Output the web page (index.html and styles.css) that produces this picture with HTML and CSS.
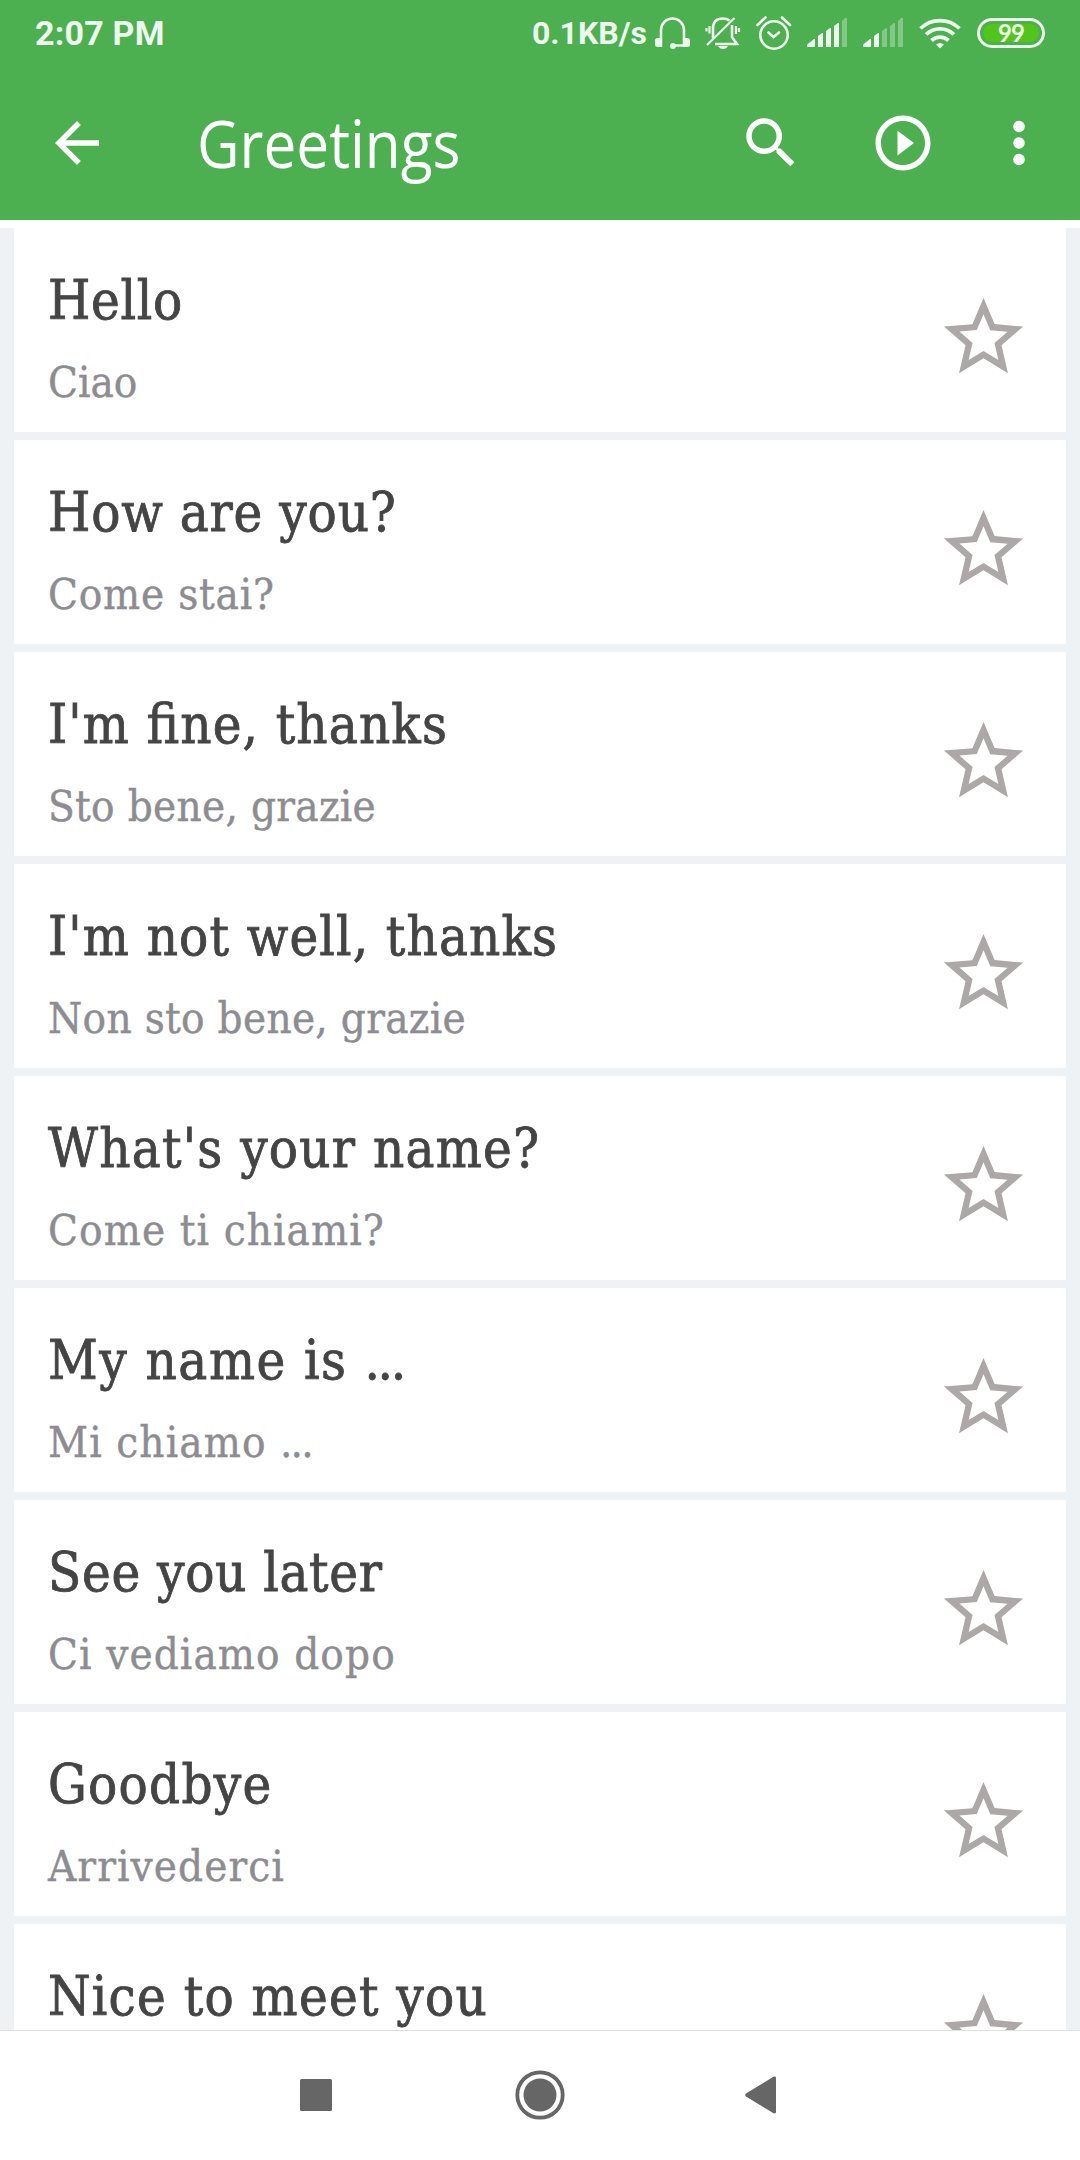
FILE: index.html
```html
<!DOCTYPE html>
<html>
<head>
  <meta charset="utf-8">
  <title>Greetings</title>
  <link rel="stylesheet" href="styles.css">
</head>
<body>
  <div class="screen">
    <div class="status-bar">
      <span class="time">2:07 PM</span>
      <span class="speed">0.1KB/s</span>
      <svg class="headset" viewBox="655 16 36 34" width="36" height="34">
        <path d="M661 47V30a11.5 11.5 0 0 1 23 0v17M684 45.5H673" fill="none" stroke="currentColor" stroke-width="2.6"/>
        <rect x="655" y="38" width="6.5" height="9" rx="2.5"/>
        <rect x="683.5" y="38" width="6.5" height="9" rx="2.5"/>
        <circle cx="673" cy="46" r="3"/>
      </svg>
      <svg class="bell" viewBox="705 16 36 34" width="36" height="34">
        <path d="M713 38V28.5q0-10 10-10q4 0 6.500 2M732 25v12l5 7H715" fill="none" stroke="currentColor" stroke-width="2.6"/>
        <path d="M707 45L734.5 18M709.5 26v7.500M706.5 28v3.500M736 26v8M739 28v4" fill="none" stroke="currentColor" stroke-width="2.2"/>
        <path d="M718 46h10q-1.500 3-5 3t-5-3z"/>
      </svg>
      <svg class="alarm" viewBox="756 16 36 34" width="36" height="34">
        <g fill="none" stroke="currentColor" stroke-width="2.6" stroke-linecap="round">
          <circle cx="774" cy="35" r="13.7"/>
          <path d="M768.5 32.5l5 4.500 5.500-4.500M757.5 25l8-7.500M790 25l-8-7.500"/>
        </g>
      </svg>
      <svg class="signal" viewBox="0 0 40 34" width="40" height="34">
        <path d="M0 31v-2.5L7 23h1v8zM11 31V20l4-3h1v14zM19 31V15l4-3h1v19zM27 31V10l4-3h1v24z"/>
        <path class="off" d="M35 31V5l3-3h2v29z"/>
      </svg>
      <svg class="signal" viewBox="0 0 40 34" width="40" height="34">
        <path d="M0 31v-2.5L7 23h1v8zM11 31V20l4-3h1v14z"/>
        <path class="off" d="M19 31V15l4-3h1v19zM27 31V10l4-3h1v24zM35 31V5l3-3h2v29z"/>
      </svg>
      <svg class="wifi" viewBox="0 0 42 34" width="42" height="34">
        <path d="M1.5 12.5a28 28 0 0 1 39 0M7 18.5a20 20 0 0 1 28 0M12.5 24.5a12.5 12.5 0 0 1 17 0" fill="none" stroke="currentColor" stroke-width="3.8"/>
        <path d="M21 32.5l-4-4q4-3 8 0z"/>
      </svg>
      <span class="battery">99</span>
    </div>

    <div class="app-bar">
      <svg class="back" viewBox="0 0 24 24"><path d="M20 11H7.83l5.59-5.59L12 4l-8 8 8 8 1.41-1.41L7.83 13H20v-2z"/></svg>
      <h1>Greetings</h1>
      <svg class="search" viewBox="0 0 24 24"><path d="M15.5 14h-.79l-.28-.27A6.471 6.471 0 0 0 16 9.5 6.5 6.5 0 1 0 9.5 16c1.61 0 3.09-.59 4.23-1.57l.27.28v.79l5 4.99L20.49 19l-4.99-5zm-6 0C7.01 14 5 11.99 5 9.5S7.01 5 9.5 5 14 7.01 14 9.5 11.99 14 9.5 14z"/></svg>
      <svg class="play" viewBox="0 0 24 24"><path d="M10 16.5l6-4.5-6-4.5v9zM12 2C6.48 2 2 6.48 2 12s4.48 10 10 10 10-4.48 10-10S17.52 2 12 2zm0 18c-4.41 0-8-3.59-8-8s3.59-8 8-8 8 3.59 8 8-3.59 8-8 8z"/></svg>
      <svg class="more" viewBox="0 0 24 24"><circle cx="12" cy="6" r="2.1"/><circle cx="12" cy="12" r="2.1"/><circle cx="12" cy="18" r="2.1"/></svg>
    </div>

    <svg width="0" height="0" class="defs">
      <symbol id="star" viewBox="0 0 24 24"><path d="M22 9.24l-7.19-.62L12 2 9.19 8.63 2 9.24l5.46 4.73L5.82 21 12 17.27 18.18 21l-1.63-7.03L22 9.24zM12 15.4l-3.76 2.27 1-4.28-3.32-2.88 4.38-.38L12 6.1l1.71 4.04 4.38.38-3.32 2.88 1 4.28L12 15.4z"/></symbol>
    </svg>

    <ul class="phrases">
      <li class="tight">
        <div><p class="phrase">Hello</p><p class="translation">Ciao</p></div>
        <svg class="star"><use href="#star"/></svg>
      </li>
      <li class="medium">
        <div><p class="phrase">How are you?</p><p class="translation">Come stai?</p></div>
        <svg class="star"><use href="#star"/></svg>
      </li>
      <li class="long">
        <div><p class="phrase">I'm fine, thanks</p><p class="translation">Sto bene, grazie</p></div>
        <svg class="star"><use href="#star"/></svg>
      </li>
      <li class="long">
        <div><p class="phrase">I'm not well, thanks</p><p class="translation">Non sto bene, grazie</p></div>
        <svg class="star"><use href="#star"/></svg>
      </li>
      <li>
        <div><p class="phrase">What's your name?</p><p class="translation">Come ti chiami?</p></div>
        <svg class="star"><use href="#star"/></svg>
      </li>
      <li class="dotted">
        <div><p class="phrase">My name is <span>...</span></p><p class="translation">Mi chiamo <span>...</span></p></div>
        <svg class="star"><use href="#star"/></svg>
      </li>
      <li class="later">
        <div><p class="phrase">See you later</p><p class="translation">Ci vediamo dopo</p></div>
        <svg class="star"><use href="#star"/></svg>
      </li>
      <li>
        <div><p class="phrase">Goodbye</p><p class="translation">Arrivederci</p></div>
        <svg class="star"><use href="#star"/></svg>
      </li>
      <li>
        <div><p class="phrase">Nice to meet you</p></div>
        <svg class="star"><use href="#star"/></svg>
      </li>
    </ul>

    <div class="nav-bar">
      <svg viewBox="0 0 32 32" width="32" height="32"><rect width="32" height="32" rx="1.5"/></svg>
      <svg class="home" viewBox="0 0 50 50" width="50" height="50"><circle cx="25" cy="25" r="22.7" fill="none" stroke="currentColor" stroke-width="3.8"/><circle cx="25" cy="25" r="16.5"/></svg>
      <svg viewBox="0 0 32 38" width="32" height="38"><path d="M1 17.5L28.5.7q2.500-.7 2.500 1.300v34q0 2-2.500 1.200L1 20.500q-1.500-1.500 0-3z"/></svg>
    </div>
  </div>
</body>
</html>
```

FILE: styles.css
```css
* {
  box-sizing: border-box;
  margin: 0;
  padding: 0;
}

body {
  background-color: #ffffff;
  font-family: Roboto, sans-serif;
}

.screen {
  width: 1080px;
  height: 2160px;
  display: flex;
  flex-direction: column;
  overflow: hidden;
}

svg {
  display: block;
  flex: none;
  fill: currentColor;
}

/* Status bar */
.status-bar {
  height: 66px;
  flex: none;
  display: flex;
  align-items: center;
  padding: 0 35px;
  background-color: #4caf50;
  color: #edf7ed;
  font-weight: bold;
}

.time {
  font-size: 34px;
  line-height: 68px;
  letter-spacing: 0.2px;
  margin-right: auto;
}

.speed {
  font-size: 32px;
  line-height: 68px;
  margin-right: 8px;
}

.bell {
  margin-left: 14px;
}

.alarm {
  margin-left: 15px;
}

.signal {
  margin-left: 16px;
}

.alarm + .signal {
  margin-left: 15px;
}

.signal .off {
  opacity: 0.35;
}

.wifi {
  margin: 0 16px;
}

.battery {
  width: 68px;
  height: 30px;
  border: 3px solid #edf7ed;
  border-radius: 15px;
  background-color: #53c419;
  background-clip: content-box;
  padding: 3px;
  font-family: Lato, sans-serif;
  font-size: 24px;
  line-height: 18px;
  letter-spacing: -1px;
  text-align: center;
}

/* App bar */
.app-bar {
  height: 154px;
  flex: none;
  display: flex;
  align-items: center;
  padding: 0 28px 0 44px;
  background-color: #4caf50;
  color: #ffffff;
}

.app-bar svg {
  width: 66px;
  height: 66px;
}

h1 {
  font-family: "Open Sans", sans-serif;
  font-size: 65px;
  font-weight: normal;
  margin-left: 87px;
  margin-right: auto;
  transform: scaleX(0.9);
  transform-origin: left;
}

.play {
  margin-left: 66px;
}

.more {
  margin-left: 50px;
}

.defs {
  position: absolute;
}

/* Phrase list */
.phrases {
  flex: 1;
  min-height: 0;
  overflow: hidden;
  list-style-type: none;
  background-color: #eef2f5;
  border-top: 8px solid #ffffff;
  padding: 0 14px;
}

.phrases li {
  height: 204px;
  margin-bottom: 8px;
  padding: 0 35px 0 34px;
  display: flex;
  justify-content: space-between;
  background-color: #ffffff;
}

.phrases li div {
  padding-top: 37px;
  white-space: nowrap;
  font-family: "DejaVu Serif Condensed", "DejaVu Serif", serif;
  font-stretch: condensed;
  font-feature-settings: "liga";
}

.phrase {
  font-size: 54px;
  line-height: 72px;
  letter-spacing: 1.25px;
  color: #444444;
  -webkit-text-stroke: 0.8px #444444;
}

.translation {
  font-size: 43.5px;
  line-height: 60px;
  letter-spacing: 1.1px;
  margin-top: 15px;
  color: #8c8c91;
  -webkit-text-stroke: 0.4px #8c8c91;
}

.tight .phrase,
.later .phrase {
  letter-spacing: 0.7px;
}

.tight .translation {
  letter-spacing: 0;
}

.medium .phrase,
.medium .translation {
  letter-spacing: 0.8px;
}

.long .phrase {
  letter-spacing: 1.15px;
}

.long .translation {
  letter-spacing: 0.3px;
}

.dotted .phrase {
  letter-spacing: 1.6px;
}

.dotted .phrase span {
  letter-spacing: -2.4px;
}

.dotted .translation span {
  letter-spacing: -1.9px;
}

.star {
  width: 95px;
  height: 95px;
  margin-top: 62px;
  color: #aca8a8;
}

/* Navigation bar */
.nav-bar {
  height: 130px;
  flex: none;
  display: flex;
  align-items: center;
  justify-content: space-between;
  padding: 0 303px 1px 300px;
  border-top: 1px solid #e0e0e0;
  background-color: #ffffff;
  color: #666666;
}

.home {
  margin-left: 3px;
}
```
